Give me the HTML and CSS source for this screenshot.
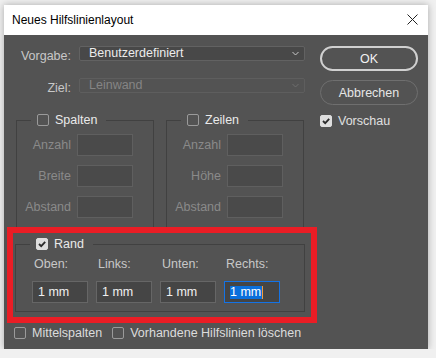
FILE: index.html
```html
<!DOCTYPE html>
<html lang="de">
<head>
    <meta charset="UTF-8">
    <title>Neues Hilfslinienlayout</title>
    <link rel="stylesheet" href="styles.css">
</head>
<body>
    <div class="dialog">
        <div class="titlebar">
            <span class="title">Neues Hilfslinienlayout</span>
            <svg class="close" width="11" height="11" viewBox="0 0 11 11">
                <path d="M0.5 0.5 L10.5 10.5 M10.5 0.5 L0.5 10.5" stroke="#222" stroke-width="1" fill="none"/>
            </svg>
        </div>

        <div class="content">
            <div class="main">
                <div class="field-row">
                    <span class="field-label">Vorgabe:</span>
                    <div class="select">
                        <span>Benutzerdefiniert</span>
                        <svg width="7" height="5" viewBox="0 0 7 5"><path d="M0.5 1 L3.5 4 L6.5 1" stroke="#c8c8c8" fill="none"/></svg>
                    </div>
                </div>

                <div class="field-row second">
                    <span class="field-label">Ziel:</span>
                    <div class="select disabled">
                        <span>Leinwand</span>
                        <svg width="7" height="5" viewBox="0 0 7 5"><path d="M0.5 1 L3.5 4 L6.5 1" stroke="#6f6f6f" fill="none"/></svg>
                    </div>
                </div>

                <div class="groups">
                    <fieldset class="group">
                        <legend><span class="check"></span>Spalten</legend>
                        <div class="grid-row"><span>Anzahl</span><span class="box"></span></div>
                        <div class="grid-row"><span>Breite</span><span class="box"></span></div>
                        <div class="grid-row"><span>Abstand</span><span class="box"></span></div>
                    </fieldset>
                    <fieldset class="group">
                        <legend><span class="check"></span>Zeilen</legend>
                        <div class="grid-row"><span>Anzahl</span><span class="box"></span></div>
                        <div class="grid-row"><span>Höhe</span><span class="box"></span></div>
                        <div class="grid-row"><span>Abstand</span><span class="box"></span></div>
                    </fieldset>
                </div>

                <fieldset class="rand">
                    <legend>
                        <span class="check checked">
                            <svg width="10" height="10" viewBox="0 0 10 10"><path d="M2 5 L4.2 7.2 L8.2 2.8" stroke="#2b2b2b" stroke-width="1.8" fill="none"/></svg>
                        </span>Rand
                    </legend>
                    <div class="margins">
                        <div class="margin-col"><span>Oben:</span><span class="value">1 mm</span></div>
                        <div class="margin-col"><span>Links:</span><span class="value">1 mm</span></div>
                        <div class="margin-col"><span>Unten:</span><span class="value">1 mm</span></div>
                        <div class="margin-col"><span>Rechts:</span><span class="value active"><span class="selected">1 mm</span><span class="caret"></span></span></div>
                    </div>
                </fieldset>

                <div class="options">
                    <span class="check"></span><span class="option-text">Mittelspalten</span>
                    <span class="check"></span><span>Vorhandene Hilfslinien löschen</span>
                </div>
            </div>

            <div class="buttons">
                <div class="btn primary">OK</div>
                <div class="btn">Abbrechen</div>
                <div class="preview">
                    <span class="check checked">
                        <svg width="10" height="10" viewBox="0 0 10 10"><path d="M2 5 L4.2 7.2 L8.2 2.8" stroke="#2b2b2b" stroke-width="1.8" fill="none"/></svg>
                    </span>Vorschau
                </div>
            </div>

            <!-- annotation frame around the margin group -->
            <div class="highlight"></div>
        </div>
    </div>
</body>
</html>
```

FILE: styles.css
```css
body {
    margin: 0;
    background-color: #f0f0f0;
    font-family: "Liberation Sans", Arial, sans-serif;
    font-size: 12.5px;
}

.dialog {
    margin: 5px 0 0 4px;
    width: 424px;
    box-shadow: 0 0 7px rgba(0,0,0,0.3);
}

.titlebar {
    height: 30px;
    background-color: white;
    display: flex;
    align-items: center;
    justify-content: space-between;
    padding: 0 10px 0 8px;
    font-size: 12px;
    color: #000;
}

.title {
    margin-top: -1px;
}

.close {
    margin-top: -1px;
}

.content {
    position: relative;
    height: 314px;
    background-color: #535353;
    display: flex;
    color: #c8c8c8;
}

.main {
    width: 312px;
    padding-top: 11px;
}

.field-row {
    display: flex;
    align-items: flex-start;
    gap: 8px;
    height: 15px;
}

.field-row.second {
    margin-top: 17px;
}

.field-label {
    width: 67px;
    text-align: right;
    margin-top: 3px;
    line-height: 14px;
}

.select {
    width: 226px;
    height: 15px;
    box-sizing: border-box;
    border: 1px solid #626262;
    border-radius: 2px;
    background-color: #484848;
    display: flex;
    align-items: center;
    justify-content: space-between;
    padding: 0 5px 0 9px;
    color: #ececec;
    line-height: 13px;
}

.select.disabled {
    background-color: #535353;
    border-color: #5e5e5e;
    color: #858585;
}

.check {
    display: inline-flex;
    align-items: center;
    justify-content: center;
    width: 12px;
    height: 12px;
    box-sizing: border-box;
    border: 1px solid #9a9a9a;
    border-radius: 2px;
    margin-right: 6px;
    flex: none;
}

.check.checked {
    background-color: #dedede;
    border-color: #dedede;
}

fieldset {
    margin: 0;
    padding: 0;
    min-width: 0;
    border: 1px solid #414141;
}

legend {
    display: flex;
    align-items: center;
    height: 14px;
    padding: 0 9px 0 6px;
    margin-left: 14px;
    color: #eaeaea;
}

.groups {
    display: flex;
    gap: 12px;
    margin: 20px 0 0 12px;
}

.group {
    width: 138px;
    box-sizing: border-box;
    padding: 7px 0 12px 0;
    height: 118px;
}

.grid-row {
    display: flex;
    align-items: center;
    gap: 6px;
    color: #8a8a8a;
}

.grid-row + .grid-row {
    margin-top: 9px;
}

.grid-row span:first-child {
    width: 54px;
    text-align: right;
}

.box {
    width: 56px;
    height: 22px;
    box-sizing: border-box;
    border: 1px solid #5f5f5f;
    background-color: #4a4a4a;
}

.rand {
    width: 290px;
    box-sizing: border-box;
    margin: 6px 0 0 11px;
    padding: 6px 0 8px 0;
}

.margins {
    display: flex;
    gap: 8px;
    padding-left: 16px;
}

.margin-col {
    display: flex;
    flex-direction: column;
    gap: 10px;
}

.margin-col > span:first-child {
    padding-left: 2px;
    line-height: 14px;
}

.value {
    display: flex;
    align-items: center;
    width: 56px;
    height: 22px;
    box-sizing: border-box;
    border: 1px solid #666;
    background-color: #454545;
    padding-left: 5px;
    color: #f0f0f0;
}

.value.active {
    border-color: #1473e6;
}

.selected {
    background-color: #0a6fdb;
    color: white;
    line-height: 13px;
    padding-right: 1px;
}

.caret {
    width: 1px;
    height: 13px;
    background-color: #f39c3c;
}

.options {
    display: flex;
    align-items: center;
    margin: 14px 0 0 10px;
    color: #dcdcdc;
}

.option-text {
    margin-right: 10px;
}

.buttons {
    width: 98px;
    margin-left: 4px;
    padding-top: 11px;
}

.btn {
    height: 25px;
    box-sizing: border-box;
    border: 1.5px solid #6f6f6f;
    border-radius: 13px;
    display: flex;
    align-items: center;
    justify-content: center;
    color: #e6e6e6;
    margin-bottom: 9px;
}

.btn.primary {
    border: 2px solid #d0d0d0;
    color: #f2f2f2;
}

.preview {
    display: flex;
    align-items: center;
    margin-top: 4px;
    color: #e0e0e0;
}

.highlight {
    position: absolute;
    left: 3px;
    top: 192px;
    width: 310px;
    height: 96px;
    box-sizing: border-box;
    border: 6px solid #ea1d25;
}
```
